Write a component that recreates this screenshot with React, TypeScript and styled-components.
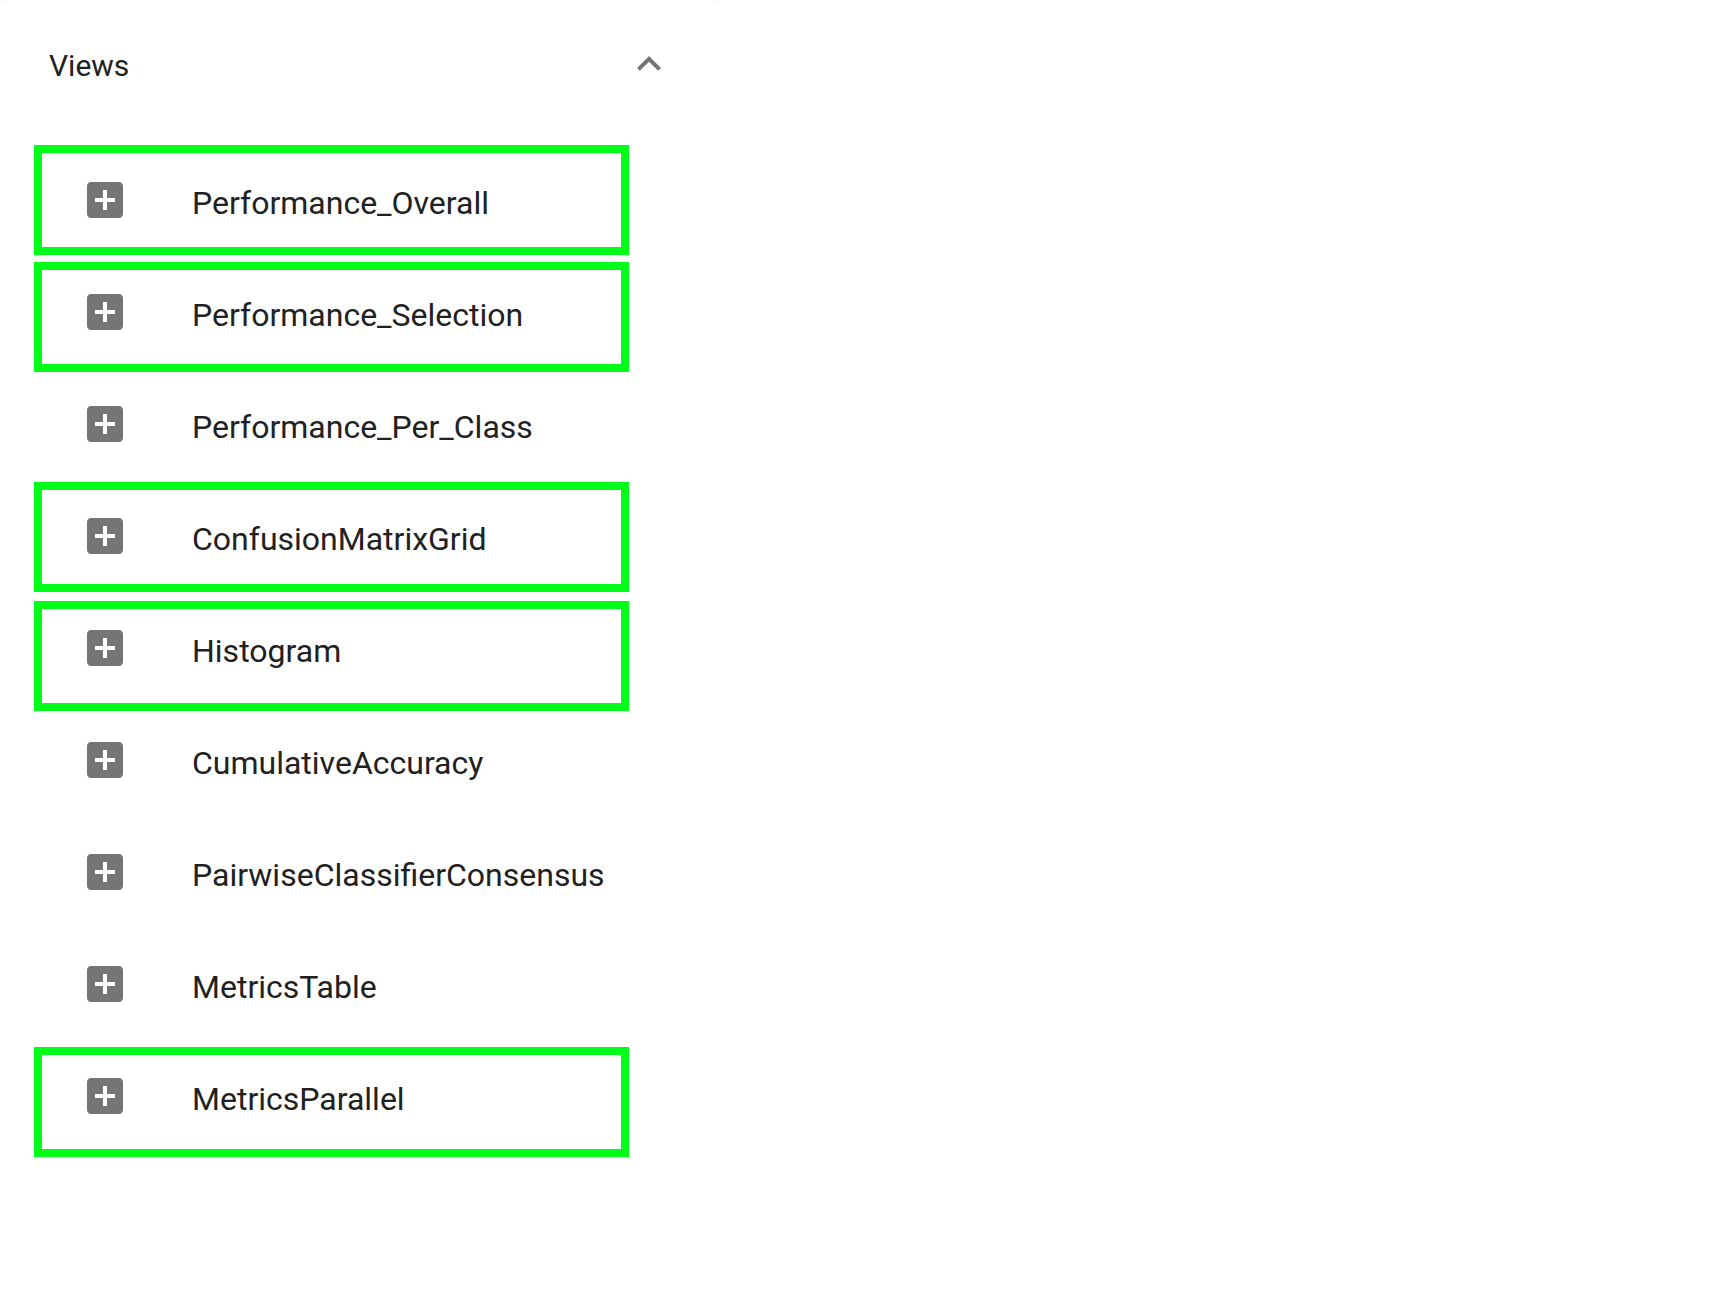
import React from "react";
import styled, { createGlobalStyle, css } from "styled-components";

const Global = createGlobalStyle`
  html, body {
    margin: 0;
    padding: 0;
    background: #ffffff;
  }
  body {
    font-family: Roboto, "Liberation Sans", Arial, sans-serif;
  }
`;

const Panel = styled.section`
  width: 721px;
  background: #ffffff;
  border-radius: 8px 8px 0 0;
  box-shadow: 0 -3px 2px -2px rgba(226, 228, 170, 0.9);
`;

const Summary = styled.div`
  display: flex;
  align-items: center;
  height: 128px;
  padding: 0 48px 0 49px;
  box-sizing: border-box;
`;

const Title = styled.h2`
  flex: 1;
  margin: 0;
  padding-top: 4px;
  font-size: 30px;
  font-weight: 400;
  line-height: 40px;
  color: #212121;
`;

const ExpandButton = styled.button`
  display: flex;
  align-items: center;
  justify-content: center;
  width: 48px;
  height: 48px;
  padding: 0;
  border: none;
  background: none;
  color: #757575;
  cursor: pointer;
`;

const Details = styled.div`
  padding: 16px 48px 48px 48px;
`;

const List = styled.ul`
  list-style: none;
  margin: 0;
  padding: 0;
`;

const Item = styled.li<{ $mark?: number }>`
  position: relative;
  display: flex;
  align-items: center;
  height: 112px;
  padding-left: 33px;
  ${(p) =>
    p.$mark !== undefined &&
    css`
      &::after {
        content: "";
        position: absolute;
        left: -14px;
        top: ${p.$mark}px;
        width: 595px;
        height: 110px;
        box-sizing: border-box;
        border: 8px solid rgb(0, 255, 24);
        pointer-events: none;
      }
    `}
`;

const ItemIcon = styled.span`
  display: flex;
  align-items: center;
  flex: none;
  width: 111px;
  color: #757575;
`;

const ItemText = styled.span`
  font-size: 32px;
  line-height: 48px;
  padding-top: 6px;
  color: #212121;
  white-space: nowrap;
`;

const AddBoxIcon = () => (
  <svg width="48" height="48" viewBox="0 0 24 24" fill="currentColor" aria-hidden="true">
    <path d="M19 3H5c-1.11 0-2 .9-2 2v14c0 1.1.89 2 2 2h14c1.1 0 2-.9 2-2V5c0-1.1-.9-2-2-2zm-2 10h-4v4h-2v-4H7v-2h4V7h2v4h4v2z" />
  </svg>
);

const ExpandLessIcon = () => (
  <svg width="48" height="48" viewBox="0 0 24 24" fill="currentColor" aria-hidden="true">
    <path d="M12 8l-6 6 1.41 1.41L12 10.83l4.59 4.58L18 14z" />
  </svg>
);

const views: { name: string; mark?: number }[] = [
  { name: "Performance_Overall", mark: 1 },
  { name: "Performance_Selection", mark: 6 },
  { name: "Performance_Per_Class" },
  { name: "ConfusionMatrixGrid", mark: 2 },
  { name: "Histogram", mark: 9 },
  { name: "CumulativeAccuracy" },
  { name: "PairwiseClassifierConsensus" },
  { name: "MetricsTable" },
  { name: "MetricsParallel", mark: 7 },
];

export default function App() {
  return (
    <>
      <Global />
      <Panel>
        <Summary>
          <Title>Views</Title>
          <ExpandButton aria-label="collapse">
            <ExpandLessIcon />
          </ExpandButton>
        </Summary>
        <Details>
          <List>
            {views.map((v) => (
              <Item key={v.name} $mark={v.mark}>
                <ItemIcon>
                  <AddBoxIcon />
                </ItemIcon>
                <ItemText>{v.name}</ItemText>
              </Item>
            ))}
          </List>
        </Details>
      </Panel>
    </>
  );
}
